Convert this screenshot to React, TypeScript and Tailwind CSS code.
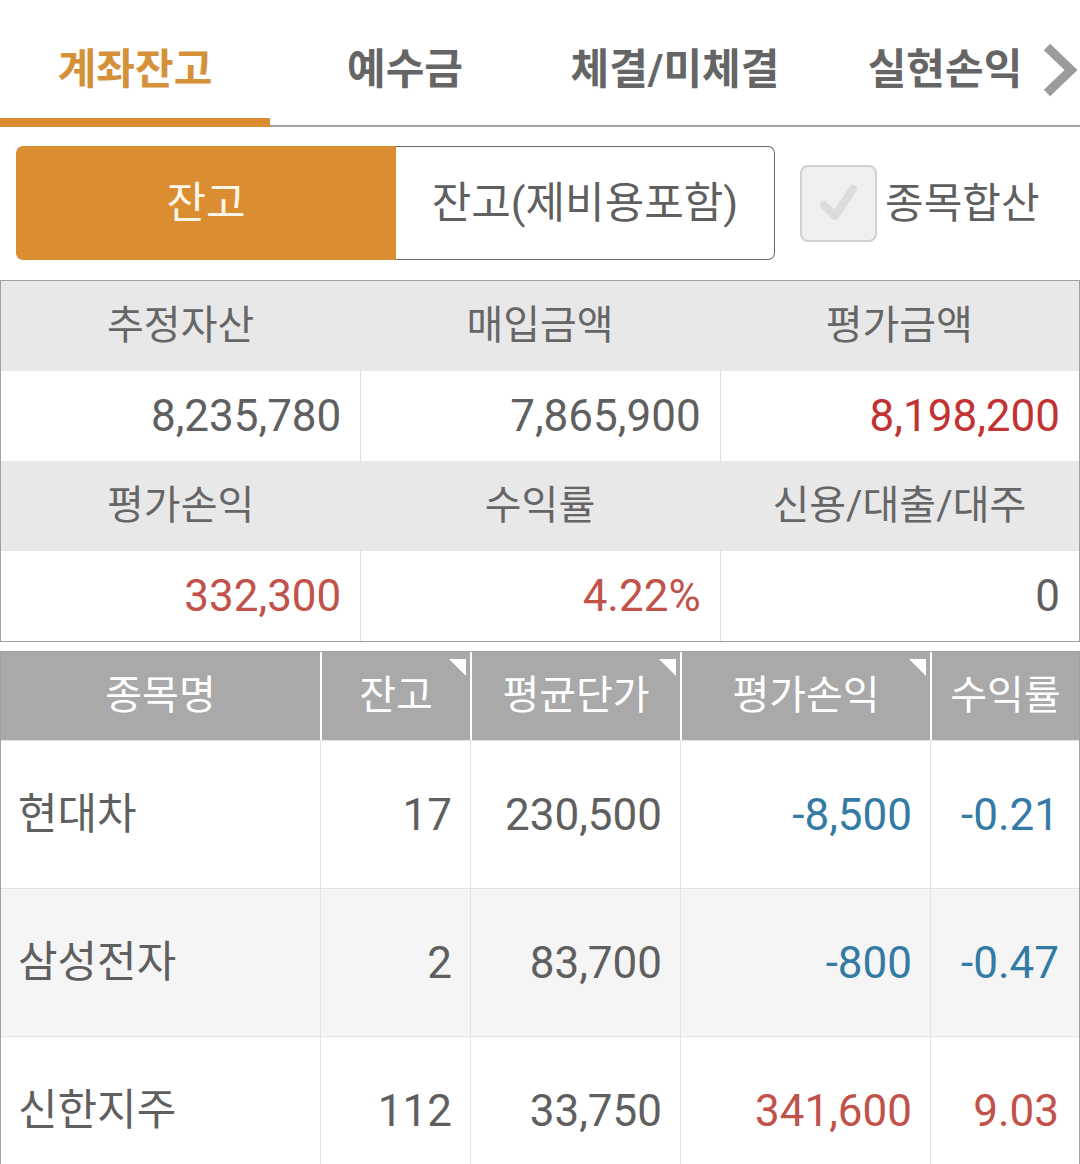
import React from "react";

const tabs = ["계좌잔고", "예수금", "체결/미체결", "실현손익"];

const summary = [
  [
    { label: "추정자산", value: "8,235,780", color: "text-[#5f5f5f]" },
    { label: "매입금액", value: "7,865,900", color: "text-[#5f5f5f]" },
    { label: "평가금액", value: "8,198,200", color: "text-[#c23232]" },
  ],
  [
    { label: "평가손익", value: "332,300", color: "text-[#c1524a]" },
    { label: "수익률", value: "4.22%", color: "text-[#c1524a]" },
    { label: "신용/대출/대주", value: "0", color: "text-[#5f5f5f]" },
  ],
];

const heads = [
  { label: "종목명", sort: false },
  { label: "잔고", sort: true },
  { label: "평균단가", sort: true },
  { label: "평가손익", sort: true },
  { label: "수익률", sort: false },
];

const rows = [
  { name: "현대차", qty: "17", avg: "230,500", pl: "-8,500", rate: "-0.21", up: false },
  { name: "삼성전자", qty: "2", avg: "83,700", pl: "-800", rate: "-0.47", up: false },
  { name: "신한지주", qty: "112", avg: "33,750", pl: "341,600", rate: "9.03", up: true },
];

export default function App() {
  return (
    <div className="w-[1080px] h-[1164px] overflow-hidden bg-white font-['Roboto','Noto_Sans_CJK_KR',sans-serif] text-[#5f5f5f]">
      {/* top tabs */}
      <div className="relative flex h-[127px] border-b-2 border-[#a3a3a3]">
        {tabs.map((t, i) => (
          <div
            key={t}
            className={
              "relative w-[270px] flex items-center justify-center pt-[14px] text-[42px] font-bold " +
              (i === 0 ? "text-[#d4913a]" : "text-[#656565]")
            }
          >
            {t}
            {i === 0 && <div className="absolute left-0 right-0 bottom-[-2px] h-[9px] bg-[#db8d32]" />}
          </div>
        ))}
        <div className="absolute right-0 top-0 h-[118px] w-[40px] flex items-center justify-center bg-white pt-[22px]">
          <svg width="38" height="56" viewBox="0 0 38 56">
            <polyline points="6,5 30,28 6,51" fill="none" stroke="#9b9b9b" strokeWidth="9" />
          </svg>
        </div>
      </div>

      {/* segment + checkbox */}
      <div className="flex items-center pl-[16px] pt-[19px] h-[133px]">
        <div className="flex h-[114px]">
          <div className="w-[380px] flex items-center justify-center rounded-l-[7px] bg-[#db8d32] text-[43px] text-[#fdf6e8]">
            잔고
          </div>
          <div className="w-[379px] flex items-center justify-center rounded-r-[7px] border border-l-0 border-[#6a6a6a] text-[43px] text-[#5f5f5f]">
            잔고(제비용포함)
          </div>
        </div>
        <div className="ml-[25px] w-[77px] h-[77px] rounded-[8px] border-2 border-[#d0d0d0] bg-[#efefef] flex items-center justify-center">
          <svg width="48" height="48" viewBox="0 0 48 48">
            <polyline points="9,26 20,37 38,10" fill="none" stroke="#dcdcdc" strokeWidth="8" strokeLinecap="round" strokeLinejoin="round" />
          </svg>
        </div>
        <span className="ml-[8px] text-[42px] text-[#5f5f5f]">종목합산</span>
      </div>

      {/* summary */}
      <div className="mt-[20px] border border-[#a0a0a0]">
        {summary.map((group, gi) => (
          <div key={gi}>
            <div className="grid grid-cols-3 h-[90px] bg-[#e8e8e8]">
              {group.map((c) => (
                <div key={c.label} className="flex items-center justify-center text-[40px] text-[#666]">
                  {c.label}
                </div>
              ))}
            </div>
            <div className="grid grid-cols-3 h-[90px] bg-white">
              {group.map((c, ci) => (
                <div
                  key={c.label}
                  className={
                    "flex items-center justify-end pr-[19px] text-[44px] " +
                    c.color +
                    (ci > 0 ? " border-l border-[#dedede]" : "")
                  }
                >
                  {c.value}
                </div>
              ))}
            </div>
          </div>
        ))}
      </div>

      {/* holdings */}
      <div className="mt-[9px] border-t border-l border-r border-[#a0a0a0]">
        <div className="grid grid-cols-[319px_150px_210px_250px_149px] h-[88px] bg-[#a9a9a9]">
          {heads.map((h, i) => (
            <div
              key={h.label}
              className={
                "relative flex items-center justify-center text-[40px] text-white" +
                (i > 0 ? " border-l-2 border-white" : "")
              }
            >
              {h.label}
              {h.sort && (
                <div className="absolute top-[7px] right-[4px] w-0 h-0 border-l-[17px] border-l-transparent border-t-[17px] border-t-white" />
              )}
            </div>
          ))}
        </div>
        {rows.map((r, ri) => {
          const c = r.up ? "text-[#c1524a]" : "text-[#337aa4]";
          return (
            <div
              key={r.name}
              className={
                "grid grid-cols-[319px_150px_210px_250px_149px] h-[148px] border-t border-[#e3e3e3] " +
                (ri === 1 ? "bg-[#f5f5f5]" : "bg-white")
              }
            >
              <div className="flex items-center pl-[17px] text-[43px] text-[#5f5f5f]">{r.name}</div>
              <div className="flex items-center justify-end pr-[18px] border-l border-[#e3e3e3] text-[44px] text-[#5f5f5f]">{r.qty}</div>
              <div className="flex items-center justify-end pr-[18px] border-l border-[#e3e3e3] text-[44px] text-[#5f5f5f]">{r.avg}</div>
              <div className={"flex items-center justify-end pr-[18px] border-l border-[#e3e3e3] text-[44px] " + c}>{r.pl}</div>
              <div className={"flex items-center justify-end pr-[20px] border-l border-[#e3e3e3] text-[44px] " + c}>{r.rate}</div>
            </div>
          );
        })}
      </div>
    </div>
  );
}
